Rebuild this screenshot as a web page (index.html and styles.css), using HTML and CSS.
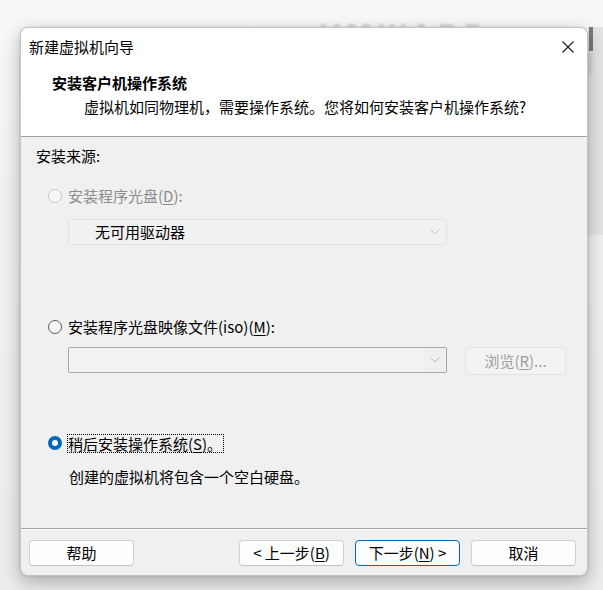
FILE: index.html
```html
<!DOCTYPE html>
<html lang="zh-CN">
<head>
<meta charset="utf-8">
<title>新建虚拟机向导</title>
<link rel="stylesheet" href="styles.css">
</head>
<body>
<div class="backdrop">
  <div class="bg-win"><div class="bg-bar"></div></div>
  <div class="bg-text">VMWARE WORKSTATION</div>
</div>
<div class="dialog">
  <div class="header">
    <div class="titlebar">
      <span class="title">新建虚拟机向导</span>
      <svg class="close" width="12" height="12" viewBox="0 0 12 12"><path d="M0.5 0.5L11.5 11.5M11.5 0.5L0.5 11.5" stroke="#1a1a1a" stroke-width="1.1" fill="none"/></svg>
    </div>
    <div class="heading">安装客户机操作系统</div>
    <div class="subtitle">虚拟机如同物理机，需要操作系统。您将如何安装客户机操作系统?</div>
  </div>
  <div class="content">
    <div class="src">安装来源:</div>
    <div class="option opt1 disabled">
      <span class="radio radio-disabled"></span>
      <span class="label">安装程序光盘(<u>D</u>):</span>
    </div>
    <div class="combo combo-disabled">
      <span class="combo-text">无可用驱动器</span>
      <svg class="chev" width="10" height="6" viewBox="0 0 10 6"><path d="M0.5 0.5L5 5L9.5 0.5" stroke="#c6c6c6" stroke-width="1" fill="none"/></svg>
    </div>
    <div class="option opt2">
      <span class="radio"></span>
      <span class="label">安装程序光盘映像文件(iso)(<u>M</u>):</span>
    </div>
    <div class="iso-row">
      <div class="combo combo-iso">
        <span class="combo-text"></span>
        <span class="drop"><svg class="chev" width="10" height="6" viewBox="0 0 10 6"><path d="M0.5 0.5L5 5L9.5 0.5" stroke="#b8b8b8" stroke-width="1" fill="none"/></svg></span>
      </div>
      <div class="btn btn-disabled">浏览(<u>R</u>)...</div>
    </div>
    <div class="option opt3">
      <span class="radio radio-checked"></span>
      <span class="label focus">稍后安装操作系统(<u>S</u>)。</span>
    </div>
    <div class="desc">创建的虚拟机将包含一个空白硬盘。</div>
  </div>
  <div class="footer">
    <div class="btn">帮助</div>
    <div class="spacer"></div>
    <div class="btn">&lt; 上一步(<u>B</u>)</div>
    <div class="btn btn-default">下一步(<u>N</u>) &gt;</div>
    <div class="btn">取消</div>
  </div>
</div>
</body>
</html>
```

FILE: styles.css
```css
html, body {
  margin: 0;
  padding: 0;
}
body {
  width: 603px;
  height: 590px;
  overflow: hidden;
  position: relative;
  background: linear-gradient(#f8f8f8 0px, #f1f1f1 200px, #ececec 590px);
  font-family: "Noto Sans CJK SC", "Noto Sans", sans-serif;
  font-size: 15px;
  color: #000;
  padding-top: 27px;
  box-sizing: border-box;
}
.backdrop {
  position: absolute;
  left: 0;
  top: 0;
  width: 603px;
  height: 590px;
}
.bg-win {
  position: absolute;
  left: 588px;
  top: 27px;
  width: 15px;
  height: 208px;
  background: #e4e4e4;
}
.bg-bar {
  width: 4px;
  height: 24px;
  margin-left: 1px;
  background: #7c7c7c;
}
.bg-text {
  position: absolute;
  left: 320px;
  top: 20px;
  font-family: "DejaVu Sans", sans-serif;
  font-size: 26px;
  font-weight: bold;
  letter-spacing: 6px;
  color: #d6d6d6;
  filter: blur(0.8px);
}
.dialog {
  position: relative;
  margin-left: 20px;
  width: 568px;
  height: 549px;
  border: 1px solid #c4c4c4;
  box-sizing: border-box;
  border-radius: 8px;
  overflow: hidden;
  display: flex;
  flex-direction: column;
  background: #f0f0f0;
  box-shadow: 0 6px 18px rgba(0, 0, 0, 0.28), 0 0 3px rgba(0, 0, 0, 0.12);
}
.header {
  background: #fff;
  height: 109px;
  box-sizing: border-box;
  border-bottom: 1px solid #a0a0a0;
  flex: none;
}
.titlebar {
  height: 37px;
  display: flex;
  align-items: center;
  justify-content: space-between;
  padding: 0 13px 0 8px;
}
.title {
  line-height: 20px;
}
.close {
  display: block;
  margin-top: 0;
}
.heading {
  font-weight: bold;
  line-height: 20px;
  margin-top: 8px;
  padding-left: 31px;
}
.subtitle {
  line-height: 20px;
  margin-top: 4px;
  padding-left: 63px;
}
.content {
  flex: 1;
  padding-left: 15px;
  box-sizing: border-box;
  border-bottom: 1px solid #a0a0a0;
}
.src {
  line-height: 20px;
  margin-top: 9px;
}
.option {
  display: flex;
  align-items: center;
  height: 20px;
  padding-left: 12px;
}
.opt1 { margin-top: 20px; }
.opt2 { margin-top: 72px; }
.opt3 { margin-top: 58px; }
.radio {
  width: 14px;
  height: 14px;
  box-sizing: border-box;
  border-radius: 50%;
  border: 1px solid #5a5a5a;
  background: #f6f6f6;
  flex: none;
  margin-right: 6px;
}
.radio-disabled {
  border-color: #c8c8c8;
  background: #f7f7f7;
}
.radio-checked {
  border: 4px solid #0067c0;
  background: #fff;
}
.label {
  line-height: 20px;
}
.disabled .label {
  color: #8c8c8c;
}
.focus {
  outline: 1px dotted #000;
  outline-offset: -1px;
  padding: 0 2px 0 1px;
  margin-left: -1px;
  height: 19px;
  line-height: 19px;
}
.combo {
  height: 26px;
  box-sizing: border-box;
  display: flex;
  align-items: center;
  border-radius: 3px;
  position: relative;
}
.combo-disabled {
  margin-top: 13px;
  margin-left: 32px;
  width: 379px;
  border: 1px solid #e2e2e2;
  background: #f1f1f1;
}
.combo-text {
  flex: 1;
  padding-left: 26px;
  line-height: 20px;
}
.combo-disabled .chev {
  margin-right: 6px;
}
.iso-row {
  display: flex;
  align-items: flex-start;
  margin-top: 10px;
  margin-left: 32px;
  gap: 18px;
}
.combo-iso {
  width: 379px;
  border: 1px solid #a6a6a6;
  background: #f2f2f2;
  border-radius: 2px;
}
.drop {
  width: 23px;
  height: 24px;
  display: flex;
  align-items: center;
  justify-content: center;
  background: #f0f0f0;
}
.chev {
  display: block;
}
.desc {
  line-height: 20px;
  margin-top: 14px;
  padding-left: 33px;
}
.footer {
  flex: none;
  height: 46px;
  box-sizing: border-box;
  border-top: 1px solid #fff;
  display: flex;
  align-items: flex-start;
  padding: 10px 11px 0 8px;
  gap: 11px;
}
.spacer {
  flex: 1;
}
.btn {
  width: 105px;
  height: 26px;
  box-sizing: border-box;
  border: 1px solid #d0d0d0;
  border-bottom-color: #c2c2c2;
  border-radius: 4px;
  background: #fdfdfd;
  display: flex;
  align-items: center;
  justify-content: center;
  line-height: 20px;
  flex: none;
}
.btn-default {
  border: 1px solid #0067c0;
}
.btn-disabled {
  width: 101px;
  height: 28px;
  border-color: #e3e3e3;
  background: #f3f3f3;
  color: #a0a0a0;
}
u {
  text-decoration: underline;
  text-underline-offset: 2px;
}
```
